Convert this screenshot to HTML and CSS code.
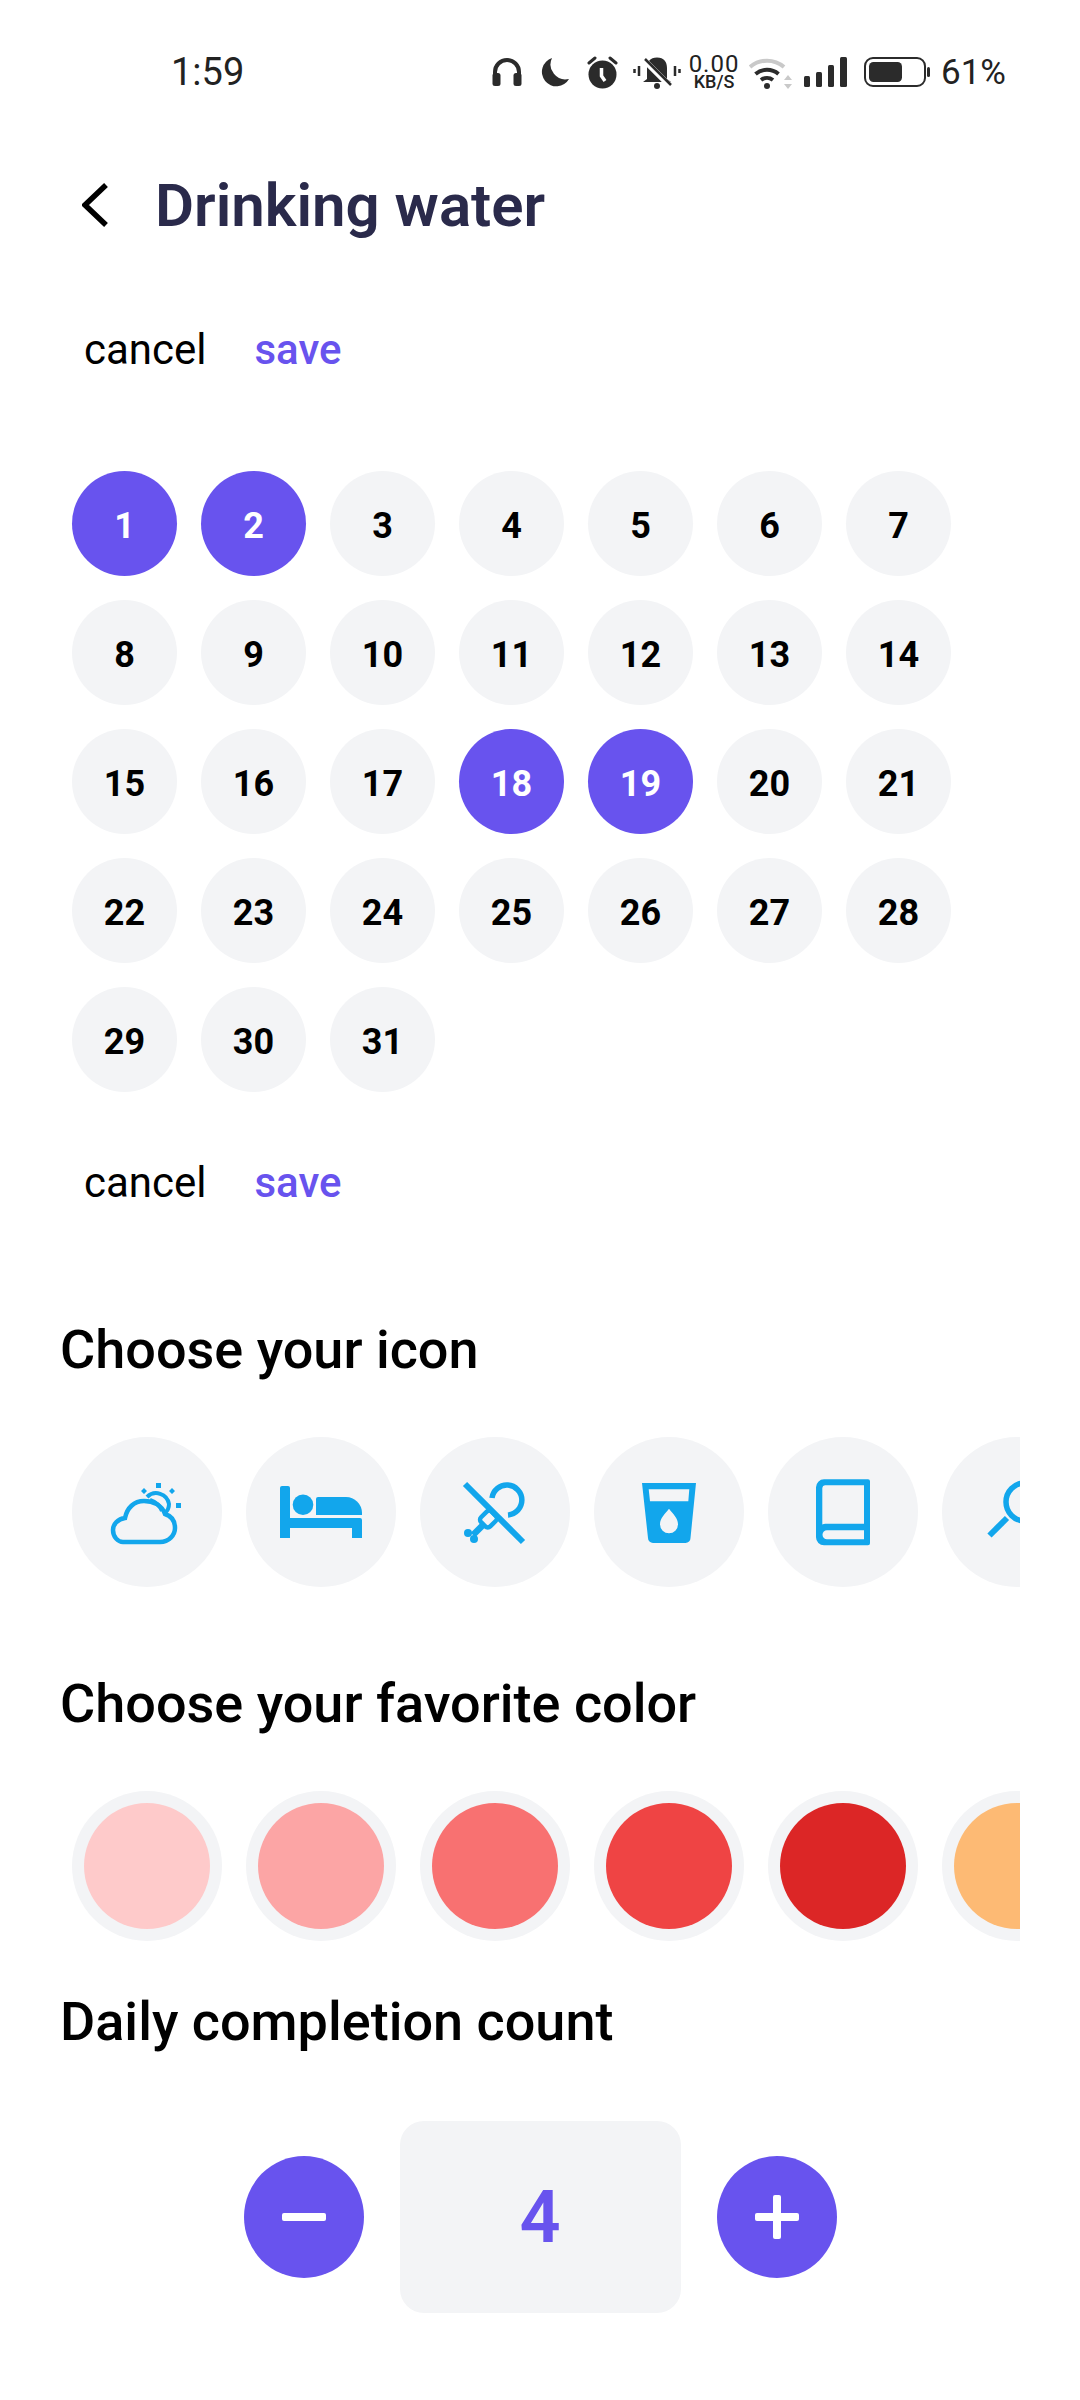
FILE: index.html
```html
<!DOCTYPE html>
<html lang="en">
<head>
<meta charset="utf-8">
<title>Drinking water</title>
<link rel="stylesheet" href="styles.css">
</head>
<body>
<div class="status">
  <span class="time">1:59</span>
  <div class="status-right">
    <svg class="si-head" viewBox="0 0 30 28"><path d="M3 18V14A12 12 0 0 1 27 14V18" fill="none" stroke="#2b2b2b" stroke-width="4"/><rect x="0.500" y="15" width="8" height="13" rx="2.500" fill="#2b2b2b"/><rect x="21.500" y="15" width="8" height="13" rx="2.500" fill="#2b2b2b"/></svg>
    <svg class="si-moon" viewBox="0 0 28 29"><path d="M11 0A15 15 0 0 0 28 21A14.500 14.500 0 1 1 11 0Z" fill="#2b2b2b"/></svg>
    <svg class="si-alarm" viewBox="0 0 31 33"><circle cx="15.500" cy="18.500" r="14" fill="#2b2b2b"/><path d="M2 7L8 2M29 7L23 2" stroke="#2b2b2b" stroke-width="3" stroke-linecap="round"/><path d="M14.500 12V20L18 25" fill="none" stroke="#fff" stroke-width="3.500"/></svg>
    <svg class="si-bell" viewBox="0 0 48 33"><path d="M24 1.500C17 1.500 14 6 14 12V23L10 26H38L34 23V12C34 6 31 1.500 24 1.500Z" fill="#2b2b2b"/><circle cx="24" cy="30" r="3" fill="#2b2b2b"/><path d="M10 3L38 31" stroke="#fff" stroke-width="6"/><path d="M12 3L38 29" stroke="#2b2b2b" stroke-width="2.500"/><path d="M1.500 13V17M6 10V20M42 10V20M46.500 13V17" stroke="#2b2b2b" stroke-width="2.500"/></svg>
    <div class="speed"><span class="speed-num">0.00</span><span class="speed-unit">KB/S</span></div>
    <svg class="si-wifi" viewBox="0 0 44 33"><path d="M1 11A26 26 0 0 1 35 11" fill="none" stroke="#c9c9c9" stroke-width="4"/><path d="M6.500 18A18 18 0 0 1 29.500 18M12 24A10 10 0 0 1 24 24" fill="none" stroke="#2b2b2b" stroke-width="4"/><circle cx="18" cy="30" r="3" fill="#2b2b2b"/><path d="M39 19L43 24H35ZM39 33L43 28H35Z" fill="#c9c9c9"/></svg>
    <svg class="si-signal" viewBox="0 0 43 30"><rect x="0" y="19" width="6" height="11" rx="1.500" fill="#2b2b2b"/><rect x="12" y="15" width="6" height="15" rx="1.500" fill="#2b2b2b"/><rect x="24" y="8" width="6" height="22" rx="1.500" fill="#2b2b2b"/><rect x="36" y="0" width="7" height="30" rx="1.500" fill="#2b2b2b"/></svg>
    <svg class="si-batt" viewBox="0 0 66 30"><rect x="1" y="1" width="60" height="28" rx="8" fill="none" stroke="#2b2b2b" stroke-width="2"/><rect x="5" y="5" width="33" height="20" rx="4.500" fill="#2b2b2b"/><rect x="63" y="10" width="3" height="10" rx="1.500" fill="#2b2b2b"/></svg>
    <span class="pct">61%</span>
  </div>
</div>

<header class="header">
  <svg class="back" viewBox="0 0 26 44"><path d="M24 2L3 22L24 42" fill="none" stroke="#000" stroke-width="5.500"/></svg>
  <h1 class="title">Drinking water</h1>
</header>

<div class="actions actions-top"><span class="cancel">cancel</span><span class="save">save</span></div>

<div class="days">
  <div class="day on">1</div><div class="day on">2</div><div class="day">3</div><div class="day">4</div><div class="day">5</div><div class="day">6</div><div class="day">7</div>
  <div class="day">8</div><div class="day">9</div><div class="day">10</div><div class="day">11</div><div class="day">12</div><div class="day">13</div><div class="day">14</div>
  <div class="day">15</div><div class="day">16</div><div class="day">17</div><div class="day on">18</div><div class="day on">19</div><div class="day">20</div><div class="day">21</div>
  <div class="day">22</div><div class="day">23</div><div class="day">24</div><div class="day">25</div><div class="day">26</div><div class="day">27</div><div class="day">28</div>
  <div class="day">29</div><div class="day">30</div><div class="day">31</div>
</div>

<div class="actions actions-bottom"><span class="cancel">cancel</span><span class="save">save</span></div>

<h2 class="heading h-icon">Choose your icon</h2>
<div class="scroller icons">
  <div class="pick"><svg viewBox="0 0 150 150"><path d="M51 105H88C97 105 103 98 103 91C103 84 99 79 93 77C90 68 81 64 72 64C62 64 55 71 53 81C46 82 41 87 41 93C41 100 46 105 51 105Z" fill="none" stroke="#12a6ec" stroke-width="4.500"/><path d="M75 60A13 13 0 0 1 97 67A12 12 0 0 1 93 76M78 63C84 65 88 69 90 74" fill="none" stroke="#12a6ec" stroke-width="4"/><path d="M84 46h5v5h-5zM104 66h5v5h-5zM72 51l3 3l-3 3l-3-3zM100 51l3 3l-3 3l-3-3z" fill="#12a6ec"/></svg></div>
  <div class="pick"><svg viewBox="0 0 150 150"><path d="M36 49H42A2 2 0 0 1 44 51V101H34V51A2 2 0 0 1 36 49Z" fill="#12a6ec"/><circle cx="57" cy="67.700" r="10.300" fill="#12a6ec"/><path d="M70 62A2 2 0 0 1 72 60H100A16 16 0 0 1 116 76V78H70Z" fill="#12a6ec"/><path d="M44 81H114A2 2 0 0 1 116 83V101H106V91H44Z" fill="#12a6ec"/></svg></div>
  <div class="pick"><svg viewBox="0 0 150 150"><path d="M72 61A15 15 0 1 1 88 78" fill="none" stroke="#12a6ec" stroke-width="5.500"/><path d="M45 47L103 105" stroke="#12a6ec" stroke-width="6"/><rect x="61" y="75.500" width="15" height="13" rx="3.500" transform="rotate(-45 68.500 82)" fill="none" stroke="#12a6ec" stroke-width="4.500"/><path d="M63 88L53 98" stroke="#12a6ec" stroke-width="6.500"/><circle cx="48" cy="96" r="4" fill="#12a6ec"/><circle cx="54" cy="102" r="4" fill="#12a6ec"/></svg></div>
  <div class="pick"><svg viewBox="0 0 150 150"><path fill-rule="evenodd" d="M48 46H102L96.500 101A5 5 0 0 1 91.500 106H59A5 5 0 0 1 54 101ZM54.700 52.300L56 64.300H94.300L95.300 52.300ZM75 71.700C71 77 66 81 66 87.300A9 9 0 0 0 84 87.300C84 81 79 77 75 71.700Z" fill="#12a6ec"/></svg></div>
  <div class="pick"><svg viewBox="0 0 150 150"><path fill-rule="evenodd" d="M56 42.300H100A2 2 0 0 1 102 44.300V106.300A2 2 0 0 1 100 108.300H56A8 8 0 0 1 48 100.300V50.300A8 8 0 0 1 56 42.300ZM57 48.300A3 3 0 0 0 54.300 51V87.500A6 6 0 0 1 58 86.700H96V48.300ZM59 93.300A4.500 4.500 0 0 0 59 102.300H96V93.300Z" fill="#12a6ec"/></svg></div>
  <div class="pick"><svg viewBox="0 0 150 150"><circle cx="83" cy="65" r="19" fill="none" stroke="#12a6ec" stroke-width="5.500"/><path d="M47.500 98.500L65 81" stroke="#12a6ec" stroke-width="6"/></svg></div>
</div>

<h2 class="heading h-color">Choose your favorite color</h2>
<div class="scroller colors">
  <div class="pick"><span class="swatch c1"></span></div>
  <div class="pick"><span class="swatch c2"></span></div>
  <div class="pick"><span class="swatch c3"></span></div>
  <div class="pick"><span class="swatch c4"></span></div>
  <div class="pick"><span class="swatch c5"></span></div>
  <div class="pick"><span class="swatch c6"></span></div>
</div>

<h2 class="heading h-count">Daily completion count</h2>
<div class="counter">
  <button class="step" type="button"><svg viewBox="0 0 44 44"><rect x="0" y="18" width="44" height="8" rx="2" fill="#fff"/></svg></button>
  <div class="count">4</div>
  <button class="step" type="button"><svg viewBox="0 0 44 44"><rect x="0" y="18" width="44" height="8" rx="2" fill="#fff"/><rect x="18" y="0" width="8" height="44" rx="2" fill="#fff"/></svg></button>
</div>
</body>
</html>
```
FILE: styles.css
```css
* { box-sizing: border-box; }
html, body { margin: 0; padding: 0; background: #fff; }
body { width: 1080px; height: 2400px; overflow: hidden; font-family: Roboto, "Liberation Sans", sans-serif; color: #000; }

.status { height: 72px; margin-top: 36px; padding: 0 74px 0 171px; display: flex; justify-content: space-between; align-items: center; color: #222; }
.time { font-size: 38px; }
.status-right { display: flex; align-items: center; }
.status-right svg { display: block; flex: none; }
.si-head { width: 30px; height: 28px; margin-right: 19px; }
.si-moon { width: 28px; height: 29px; margin-right: 18px; }
.si-alarm { width: 31px; height: 33px; margin-right: 15px; }
.si-bell { width: 48px; height: 33px; margin-right: 8px; }
.speed { width: 50px; margin-right: 10px; display: flex; flex-direction: column; align-items: center; }
.speed-num { font-size: 24px; line-height: 19px; letter-spacing: 1px; }
.speed-unit { font-size: 18px; line-height: 15px; font-weight: 500; }
.si-wifi { width: 44px; height: 33px; margin-right: 11px; }
.si-signal { width: 43px; height: 30px; margin-right: 17px; }
.si-batt { width: 66px; height: 30px; margin-right: 11px; }
.pct { font-size: 35px; }

.header { height: 90px; margin-top: 52px; padding-left: 82px; display: flex; align-items: center; }
.back { width: 26px; height: 44px; margin-right: 47px; flex: none; }
.title { margin: 0; padding-top: 2px; font-size: 60px; font-weight: 600; color: #2a2a4b; line-height: 88px; }

.actions { height: 60px; padding-left: 84px; display: flex; align-items: center; gap: 48px; font-size: 42px; }
.actions-top { margin-top: 69px; }
.actions-bottom { margin-top: 60px; }
.cancel { font-weight: 400; color: #000; }
.save { font-weight: 500; color: #6853ee; }

.days { margin-top: 92px; padding-left: 72px; display: grid; grid-template-columns: repeat(7, 105px); grid-auto-rows: 105px; gap: 24px; }
.day { padding-top: 5px; border-radius: 50%; background: #f3f4f6; display: flex; align-items: center; justify-content: center; font-size: 36px; font-weight: 700; color: #000; }
.day.on { background: #6853ee; color: #fff; }

.heading { margin: 0; height: 60px; padding-left: 60px; font-size: 54px; font-weight: 500; line-height: 60px; color: #000; }
.h-icon { margin-top: 108px; }
.h-color { margin-top: 87px; }
.h-count { margin-top: 51px; }

.scroller { width: 1020px; height: 150px; margin-top: 57px; padding-left: 72px; display: flex; gap: 24px; overflow: hidden; }
.pick { flex: none; width: 150px; height: 150px; border-radius: 50%; background: #f3f4f6; display: flex; align-items: center; justify-content: center; }
.pick svg { width: 150px; height: 150px; display: block; }
.swatch { width: 126px; height: 126px; border-radius: 50%; display: block; }
.c1 { background: #fecaca; }
.c2 { background: #fca5a5; }
.c3 { background: #f87171; }
.c4 { background: #ef4444; }
.c5 { background: #dc2626; }
.c6 { background: #fdba74; }

.counter { margin-top: 69px; display: flex; justify-content: center; align-items: center; gap: 36px; }
.step { width: 120px; height: 122px; padding: 0; border: 0; border-radius: 50%; background: #6853ee; display: flex; align-items: center; justify-content: center; }
.step svg { width: 44px; height: 44px; display: block; }
.count { width: 281px; height: 192px; border-radius: 24px; background: #f3f4f6; display: flex; align-items: center; justify-content: center; font-size: 72px; font-weight: 600; color: #6853ee; }
```
